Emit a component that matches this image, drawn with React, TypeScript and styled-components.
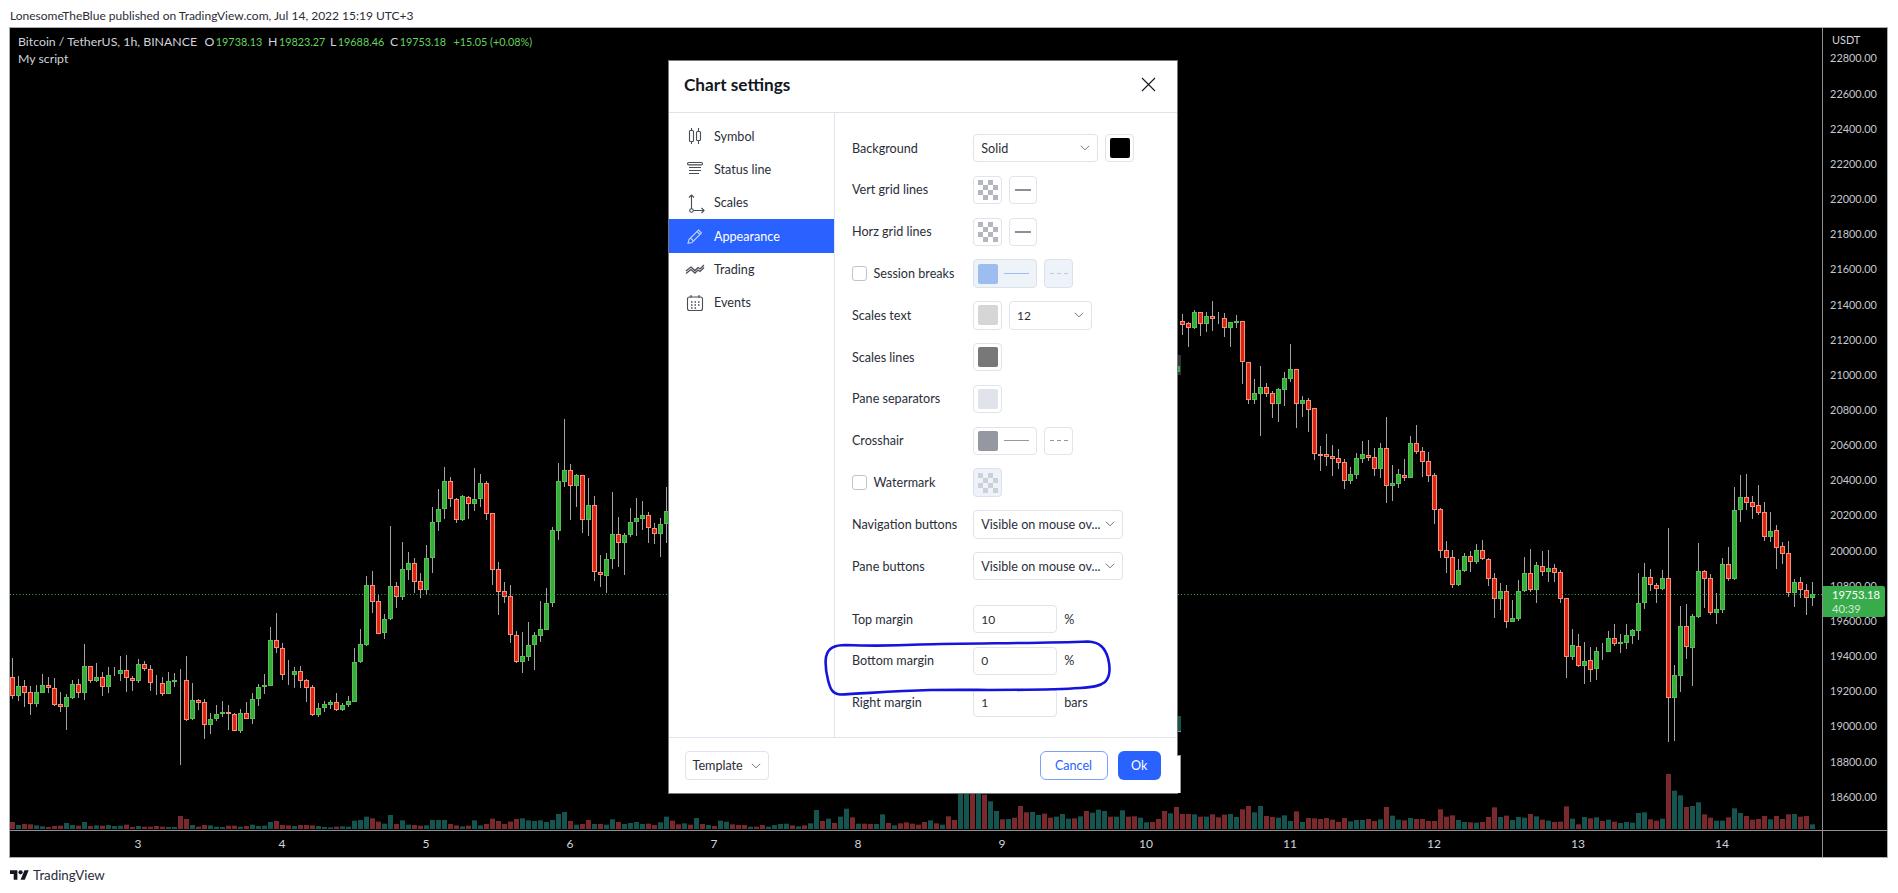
import React from "react";
import styled, { createGlobalStyle } from "styled-components";

const FONT = `Lato, "Noto Sans", "Liberation Sans", sans-serif`;

const Global = createGlobalStyle`
  html, body { margin: 0; padding: 0; background: #fff; }
  body { font-family: ${FONT}; color: #131722; }
  * { box-sizing: border-box; }
`;

/* ---------- chart data: [green, wickTop, bodyTop, bodyBottom, wickBottom] ---------- */
type Row = [number, number, number, number, number];
const at = (base: number, rows: Row[]): Row[] =>
  rows.map(([g, a, b, c, d]) => [g, base + a / 3, base + b / 3, base + c / 3, base + d / 3]);

const candlesA: Row[] = at(620, [
  [0,115,172,227,237],[1,168,199,227,243],[0,180,199,218,260],[0,198,217,251,285],[1,195,217,251,260],
  [1,162,196,218,219],[0,172,196,205,220],[0,175,205,254,258],[0,216,253,260,276],[1,222,232,260,330],
  [1,180,193,233,236],[0,178,193,218,235],[1,72,139,218,240],[0,138,139,182,190],[1,130,172,182,185],
  [0,155,172,200,228],[1,140,166,200,218],[1,140,163,166,168],[1,108,151,163,183],[0,105,151,175,216],
  [0,168,175,182,212],[1,118,133,182,188],[0,122,133,146,152],[0,135,146,188,212],[0,165,187,190,225],
  [0,172,190,221,228],[1,155,184,221,222],[1,158,181,185,200],[0,148,181,183,435],[0,108,181,299,303],
  [1,190,241,298,300],[0,237,241,248,270],[0,238,247,314,356],[1,280,298,314,342],[1,255,283,298,303],
  [1,243,275,283,290],[0,255,275,283,330],[0,280,283,332,333],[1,268,280,332,338],[0,247,280,296,296],
  [1,220,238,296,312],[1,192,202,238,258],[1,162,195,202,222],[1,22,61,197,198],[0,-21,61,85,100],
  [0,70,85,164,180],[0,120,163,165,195],[1,140,153,164,205],[0,138,154,182,205],[0,178,181,203,245],
  [0,195,202,285,287],[1,250,265,285,290],[1,242,253,265,275],[1,240,247,254,268],[0,220,247,270,272],
  [1,248,256,270,274],[1,228,244,256,260],[1,85,127,245,246],[1,28,73,127,130],
]);
const candlesB: Row[] = [
  [1,576,585,645,646],[0,571,585,602,613],[0,594,601,634,634],[1,614,619,633,639],[1,526,586,619,620],
  [0,582,586,597,608],[1,542,569,597,600],[1,552,563,570,580],[0,558,563,582,593],[0,573,581,590,598],
  [1,545,558,590,595],[1,507,522,558,573],[1,489,509,522,531],[1,467,481,509,519],[0,477,481,499,507],
  [0,498,499,520,523],[1,495,496,520,521],[0,496,497,504,519],[1,468,499,504,511],[1,474,483,499,507],
  [0,481,483,514,520],[0,513,513,570,585],[0,562,569,592,615],[0,582,591,597,603],[0,585,596,635,643],
  [0,631,635,662,663],[1,632,656,662,673],[1,622,645,657,661],[1,632,635,645,670],[1,601,629,636,642],
  [1,588,603,630,630],[1,527,530,603,607],[1,463,481,531,540],[1,419,470,482,487],[0,464,470,486,520],
  [1,474,475,486,507],[0,475,475,520,533],[1,478,505,520,536],[0,496,505,572,581],[0,555,572,575,587],
  [1,553,559,576,593],[1,492,534,559,569],[0,517,534,543,567],[1,533,535,543,575],[1,508,522,535,537],
  [1,498,518,522,536],[1,501,515,519,530],[0,512,515,528,543],[0,523,528,534,544],[1,518,524,534,557],
  [1,487,511,524,543],
];
const candlesC: Row[] = at(280, [
  [0,102,124,134,165],[0,125,130,143,200],[1,90,97,144,148],[0,97,97,131,167],[1,97,109,131,155],
  [0,63,109,116,152],[0,97,115,116,133],[0,99,115,143,170],[1,127,127,143,200],[1,105,124,128,143],
  [0,122,124,245,312],[0,245,247,359,372],[1,297,340,359,372],[1,258,322,341,468],[0,310,322,341,350],
  [0,332,340,371,414],[1,325,328,371,426],[1,277,295,329,378],[1,192,268,296,306],[0,268,268,371,443],
  [1,349,361,371,411],[0,355,361,389,455],[0,385,385,521,540],[0,498,522,527,573],[0,462,523,530,558],
  [0,495,529,536,588],[0,507,535,548,567],[0,538,547,602,627],[1,561,583,602,612],[1,519,535,584,597],
  [1,484,523,536,548],[0,480,526,533,543],[0,504,532,566,588],[1,489,505,566,594],[0,411,505,617,669],
  [1,556,610,617,663],[1,568,583,611,624],[0,537,584,593,603],[1,468,490,593,594],[0,435,490,515,522],
  [0,502,514,545,591],[0,516,544,587,606],[0,580,586,689,732],[0,684,688,812,834],[0,783,811,833,879],
]);
const candlesD: Row[] = [
  [0,550,557,585,588],[1,559,570,585,586],[1,553,556,571,572],[0,551,556,562,572],[1,544,550,562,564],
  [0,540,550,559,560],[0,558,559,579,586],[0,573,578,599,618],[1,583,591,599,610],[0,585,591,622,628],
  [1,600,618,622,622],[1,580,591,619,621],[1,557,573,591,592],[0,549,573,590,592],[1,562,565,590,603],
  [0,551,566,572,576],[1,550,568,572,582],[0,564,568,573,582],[0,570,572,599,603],[0,598,598,657,678],
  [1,629,645,657,660],[0,634,646,666,667],[1,642,661,666,684],[0,647,660,670,682],[1,647,651,669,680],
  [0,643,651,652,660],[1,631,638,652,652],[0,624,638,644,646],[1,634,642,644,653],[1,624,635,643,649],
  [1,629,630,636,644],[1,573,603,631,640],[1,563,577,603,609],[0,569,577,585,591],[0,583,585,589,603],
  [1,570,578,589,590],[0,528,578,698,742],[1,665,675,698,741],[1,606,626,676,692],[0,604,626,647,659],
  [1,614,616,648,686],[1,543,571,617,618],[0,570,571,579,608],[0,574,578,613,615],[1,593,609,613,624],
  [1,558,564,610,613],[0,547,564,579,581],[1,487,510,579,580],[1,475,497,510,522],[0,474,497,503,510],
  [0,496,502,507,519],[0,485,505,513,515],[0,502,512,537,541],[1,512,531,537,542],[0,525,530,548,569],
  [0,542,546,554,564],[0,541,553,593,597],[1,579,582,593,607],[0,577,582,590,598],[0,584,590,598,615],
  [1,582,594,598,606],
];

/* volume tops, read per strip: R = red, T = teal */
const volStrip = (base: number, floor: number, s: string) =>
  s.split(" ").map((t) => ({ red: t[0] === "R", h: (floor - Number(t.slice(1))) / base }));

const volume = [
  ...volStrip(3, 627, "R606 T615 R612 R613 T616 T619 R621 R618 R617 T609 T615 R617 T606 R618 T616 R617 T615 T618 T617 R614 R621 T618 R620 R620 R618 R620 T621 T621 R588 R597 T615 R620 R615 T616 T620 T621 R617 R617 T620 R618 T614 T618 T617 T606 R603 R615 R616 T618 R615 R615 R616 T618 T621 T622 R620 T619 T620 T602 T600 T590 R595 R605 T611 T585 R612 T601 T614 R615 R617 T616 T600 T600 T600 R612 R616 T619 R617 T601 T616 R612 R596 R603 R612 R605 R597 T595 T601 T603 T601 T606 T600 T582 T576 R603 T614 R612 R600 T612 R612 T614 T598 R606 T612 T609 T606 T612 R611 R615 T607"),
  ...volStrip(3, 387, "T350 R362 R373 T370 R374 T354 R372 T375 R378 T362 T365 R373 R375 R375 T380 R380 R375 T380 T375 T372 T371 R376 T379 R376 T370 T330 R363 T356 R369 T350 T326 R352 T371 R371 R372 T372 T343 R369 T376 R370 R367 R371 R374 R366 T361 R370 T374 R349 R360 T270 T270 R270 T270 R284 T304 T333 R358 T357 R353 R318 R337 T336 T345 R341 R353 T350 T342 T356 R355 T349 R333 T338 T329 T333 R350 T350 T331 R350 R349 T353 T367 R366 R357 R333 T340 R321"),
  ...volStrip(3, 807, "R762 R762 T763 R770 T770 R763 R772 R764 T762 T771 R748 R738 T757 T738 R768 R771 T773 T766 T783 R754 T786 R774 R775 R777 R774 R779 R786 R774 T784 T780 T780 R777 R783 T778 R741 T767 T779 R781 T774 R777 R777 R783 R783 R748 R770 R766 T780 T786 R787 T788 R786 R771 R742 T771 R767 T780 T771 T773 R762 T769 R779 T782 R786 R785 R739 T776 R793 T771 R775 T772 R783 T779 R785 T789 T786 T788 T759 T757 R778 R782 T776 R642 T692 T706 R741 T738 T727 R763 R773 T782 T782 R772"),
  ...volStrip(3, 987, "T925 T939 R948 R959 R957 R948 T958 R948 R957 R943 T942 R950 R948 T973"),
];

const barX = (i: number) => 12.6 + 6 * i;

const ChartDrawing = () => {
  const groups: Array<[number, Row[]]> = [[0, candlesA], [59, candlesB], [195, candlesC], [240, candlesD]];
  return (
    <PlotSvg viewBox="10 28 1812 802" width={1812} height={802}>
      {volume.map((v, i) => (
        <rect key={i} x={Math.round(barX(i) - 2.5)} y={829 - v.h} width={5} height={v.h} fill={v.red ? "#7a2a2d" : "#15544f"} />
      ))}
      {groups.map(([start, rows]) =>
        rows.map(([g, wt, bt, bb, wb], k) => {
          const cx = Math.round(barX(start + k) - 0.5) + 0.5;
          const t = Math.round(bt);
          const b = Math.round(bb);
          return (
            <g key={start + k}>
              <line x1={cx} x2={cx} y1={Math.round(wt)} y2={Math.round(wb)} stroke="#a3a3a3" strokeWidth={1} />
              <rect
                x={cx - 2}
                y={t + 0.5}
                width={4}
                height={Math.max(0, b - t - 1)}
                fill={g ? "#37ab3c" : "#de2317"}
                stroke={g ? "#55c24f" : "#f49272"}
                strokeWidth={1}
              />
            </g>
          );
        })
      )}
      <line x1={10} x2={1822} y1={594.5} y2={594.5} stroke="#2fae4c" strokeWidth={1} strokeDasharray="1 2.2" />
      <rect x={1177} y={716} width={4} height={15} fill="#15544f" />
      <rect x={1177} y={731} width={4} height={1} fill="#8a8a8a" />
      <rect x={1177} y={355} width={4} height={20} fill="#333" />
      <rect x={1177} y={366} width={3} height={6} fill="#37ab3c" />
    </PlotSvg>
  );
};

/* ---------- page ---------- */
const Page = styled.div`
  width: 1898px;
  height: 893px;
  overflow: hidden;
  background: #fff;
  position: relative;
`;
const Published = styled.div`
  height: 27px;
  padding: 8px 0 0 10px;
  font-size: 12px;
  line-height: 15px;
  color: #2a2e39;
`;
const Frame = styled.div`
  position: relative;
  margin-left: 9px;
  width: 1879px;
  height: 831px;
  background: #000;
  border: 1px solid #a9abb3;
  display: flex;
  flex-direction: column;
`;
const ChartRow = styled.div`
  display: flex;
  height: 802px;
`;
const Plot = styled.div`
  position: relative;
  width: 1812px;
  height: 802px;
`;
const PlotSvg = styled.svg`
  display: block;
`;
const Legend = styled.div`
  position: absolute;
  left: 8px;
  top: 5px;
  font-size: 12.3px;
  line-height: 17px;
  color: #d1d4dc;
`;
const LegendLine = styled.div`
  display: flex;
  align-items: baseline;
  white-space: nowrap;
`;
const LegendName = styled.span`
  width: 186.5px;
`;
const LegendPair = styled.span<{ $w: number }>`
  width: ${(p) => p.$w}px;
`;
const Up = styled.span`
  color: #63d35f;
  font-size: 10.8px;
  margin-left: 1.5px;
`;

const PriceAxis = styled.div`
  position: relative;
  width: 65px;
  border-left: 1px solid #8f9096;
  color: #c6c8ce;
  font-size: 10.9px;
  text-align: center;
`;
const AxisUnit = styled.div`
  height: 24px;
  margin-bottom: -11.6px;
  line-height: 24px;
  text-align: left;
  padding-left: 9px;
  color: #d1d4dc;
`;
const PriceLabel = styled.div`
  height: 35.17px;
  line-height: 35.17px;
  padding-right: 3px;
`;
const PriceTag = styled.div`
  position: absolute;
  left: 0;
  top: 558px;
  width: 62px;
  height: 31px;
  background: #38ac4b;
  border-radius: 0 2px 2px 0;
  color: #fff;
  font-size: 11.2px;
  line-height: 14px;
  padding: 2px 0 0 9px;
  text-align: left;
`;
const Countdown = styled.div`
  color: #cfead4;
`;
const TimeRow = styled.div`
  display: flex;
  flex: 1;
  border-top: 1px solid #8f9096;
`;
const TimeAxis = styled.div`
  width: 1812px;
  display: flex;
  padding-left: 56px;
  color: #d1d4dc;
  font-size: 12px;
  line-height: 26px;
`;
const TimeLabel = styled.div`
  width: 144px;
  text-align: center;
`;
const AxisCorner = styled.div`
  flex: 1;
  border-left: 1px solid #8f9096;
`;
const Brand = styled.div`
  height: 33px;
  padding-left: 10px;
  display: flex;
  align-items: center;
  gap: 4px;
  font-size: 13.3px;
  color: #2a2e39;
`;

/* ---------- dialog ---------- */
const Dialog = styled.div`
  position: absolute;
  left: 659px;
  top: 33px;
  width: 507.5px;
  height: 732px;
  background: #fff;
  box-shadow: 0 0 0 1px #77787d;
  display: flex;
  flex-direction: column;
  color: #2a2e39;
  font-size: 12.6px;
`;
const DialogTail = styled.div`
  position: absolute;
  left: 100%;
  bottom: 0;
  width: 4px;
  height: 38px;
  background: #fff;
  border-top: 1px solid #999;
  border-right: 1px solid #999;
`;
const DialogHead = styled.div`
  height: 52px;
  flex: none;
  display: flex;
  align-items: center;
  justify-content: space-between;
  padding: 0 21px 4px 15px;
  border-bottom: 1px solid #e0e3eb;
`;
const DialogTitle = styled.div`
  font-size: 17.2px;
  font-weight: 700;
  color: #131722;
`;
const CloseIcon = styled.svg`
  display: block;
  color: #131722;
`;
const DialogBody = styled.div`
  flex: 1;
  display: flex;
  min-height: 0;
`;
const Side = styled.div`
  width: 166px;
  flex: none;
  padding-top: 6.5px;
  border-right: 1px solid #e0e3eb;
`;
const SideItem = styled.div<{ $active?: boolean }>`
  height: 33.33px;
  display: flex;
  align-items: center;
  gap: 8px;
  padding-left: 15px;
  background: ${(p) => (p.$active ? "#2962ff" : "transparent")};
  color: ${(p) => (p.$active ? "#fff" : "#2a2e39")};
`;
const SideIcon = styled.svg<{ $active?: boolean }>`
  flex: none;
  width: 22px;
  height: 22px;
  fill: none;
  stroke: currentColor;
  stroke-width: 1.1;
  opacity: ${(p) => (p.$active ? 0.7 : 0.85)};
`;
const Panel = styled.div`
  flex: 1;
  padding: 21px 0 0 17px;
  display: flex;
  flex-direction: column;
  gap: 13.47px;
`;
const FieldRow = styled.div<{ $spaced?: boolean }>`
  height: 28.33px;
  display: flex;
  align-items: center;
  margin-top: ${(p) => (p.$spaced ? "11.2px" : "0")};
`;
const FieldLabel = styled.div`
  width: 121.3px;
  flex: none;
  display: flex;
  align-items: center;
  gap: 7px;
  white-space: nowrap;
`;
const Check = styled.span`
  width: 14.5px;
  height: 14.5px;
  border: 1px solid #c1c4cd;
  border-radius: 3px;
  background: #fff;
`;
const Controls = styled.div`
  display: flex;
  align-items: center;
  gap: 7px;
  height: 100%;
`;
const Select = styled.div<{ $w: number; $digits?: boolean }>`
  width: ${(p) => p.$w}px;
  height: 100%;
  border: 1px solid #e0e3eb;
  border-radius: 4px;
  display: flex;
  align-items: center;
  justify-content: space-between;
  padding: 0 7px 0 7px;
  color: #2a2e39;
  white-space: nowrap;
  font-size: ${(p) => (p.$digits ? "12px" : "inherit")};
`;
const TemplateSelect = styled(Select)`
  height: 29px;
`;
const Chevron = styled.svg`
  flex: none;
  display: block;
  color: #787b86;
`;
const SwatchButton = styled.div<{ $w?: number; $muted?: boolean }>`
  width: ${(p) => p.$w ?? 28.7}px;
  height: 100%;
  flex: none;
  border: 1px solid ${(p) => (p.$muted ? "#dde1ec" : "#e0e3eb")};
  border-radius: 4px;
  background: ${(p) => (p.$muted ? "#eef2f9" : "#fff")};
  display: flex;
  align-items: center;
  padding-left: 3.5px;
  gap: 6px;
`;
const CenterButton = styled(SwatchButton)`
  justify-content: center;
  padding-left: 0;
`;
const Swatch = styled.span<{ $c: string }>`
  width: 20px;
  height: 20px;
  flex: none;
  border-radius: 2px;
  background: ${(p) => p.$c};
`;
const Stroke = styled.span<{ $c: string; $w: number }>`
  width: ${(p) => p.$w}px;
  height: 1.5px;
  background: ${(p) => p.$c};
`;
const Dashes = styled.span<{ $c: string }>`
  width: 18px;
  height: 1.5px;
  background: repeating-linear-gradient(to right, ${(p) => p.$c} 0 4px, transparent 4px 7px);
`;
const CheckerSvg = styled.svg<{ $faded?: boolean }>`
  display: block;
  opacity: ${(p) => (p.$faded ? 0.55 : 1)};
`;
const NumberBox = styled.div`
  width: 84px;
  height: 100%;
  border: 1px solid #e0e3eb;
  border-radius: 4px;
  display: flex;
  align-items: center;
  padding-left: 7px;
  font-size: 12px;
`;
const Suffix = styled.span`
  margin-left: 0;
`;
const DialogFoot = styled.div`
  height: 56px;
  flex: none;
  display: flex;
  align-items: center;
  justify-content: space-between;
  padding: 0 16px 0 15.5px;
  border-top: 1px solid #e0e3eb;
`;
const Buttons = styled.div`
  display: flex;
  gap: 10.5px;
`;
const CancelButton = styled.div`
  width: 68px;
  height: 29px;
  border: 1px solid #7d9fff;
  border-radius: 6px;
  color: #2962ff;
  display: flex;
  align-items: center;
  justify-content: center;
`;
const OkButton = styled.div`
  width: 42.5px;
  height: 29px;
  border-radius: 6px;
  background: #2962ff;
  color: #fff;
  display: flex;
  align-items: center;
  justify-content: center;
`;
const Scribble = styled.svg`
  position: absolute;
  left: 0;
  top: 0;
  pointer-events: none;
`;

/* ---------- small drawings ---------- */
const Checker = ({ faded }: { faded?: boolean }) => (
  <CheckerSvg width={20} height={20} viewBox="0 0 20 20" $faded={faded}>
    {[0, 1, 2, 3].flatMap((r) =>
      [0, 1, 2, 3].map((c) =>
        (r + c) % 2 === 0 ? <rect key={`${r}${c}`} x={c * 5} y={r * 5} width={5} height={5} fill="#b4b6bd" /> : null
      )
    )}
  </CheckerSvg>
);
const Down = () => (
  <Chevron width={10} height={6} viewBox="0 0 10 6">
    <path d="M.8.8 5 4.8 9.2.8" fill="none" stroke="currentColor" strokeWidth={1} />
  </Chevron>
);
const SymbolIcon = () => (
  <SideIcon viewBox="0 0 22 22">
    <path d="M7.5 3v2.5M7.5 16.5V19M14.5 3v3.5M14.5 15.5V19" />
    <rect x="5.5" y="5.5" width="4" height="11" rx="1" />
    <rect x="12.5" y="6.5" width="4" height="9" rx="1" />
  </SideIcon>
);
const StatusIcon = () => (
  <SideIcon viewBox="0 0 22 22">
    <rect x="3.5" y="4.5" width="15" height="2.4" rx="1.2" />
    <path d="M5 9.5h12M5 12.5h12M5 15.5h10" />
  </SideIcon>
);
const ScalesIcon = () => (
  <SideIcon viewBox="0 0 22 22">
    <path d="M7.5 3v14M5 5.5 7.5 3 10 5.5M9.5 18.5H20M17.5 16l2.5 2.5-2.5 2.5" />
    <circle cx="7.5" cy="18.5" r="1.8" />
  </SideIcon>
);
const PencilIcon = () => (
  <SideIcon viewBox="0 0 22 22" $active>
    <path d="M5 14.5 14.5 5l3 3L8 17.5l-4 .8zM13 6.5l3 3M6.5 13l3 3" />
  </SideIcon>
);
const TradingIcon = () => (
  <SideIcon viewBox="0 0 22 22">
    <path d="M2 13 7 9l4 3.5 3-3 2 1.5 4-4M2 15.5l5-4 4 3.5 3-3 2 1.5 4-4" strokeWidth="1.3" />
  </SideIcon>
);
const EventsIcon = () => (
  <SideIcon viewBox="0 0 22 22">
    <rect x="3.5" y="5" width="15" height="13.5" rx="2" />
    <path d="M7 3v3M15 3v3" />
    <path d="M7 10h1.5M10.5 10H12M14 10h1.5M7 13h1.5M10.5 13H12M14 13h1.5M10.5 16H12M7 16h1.5" strokeWidth="1.4" />
  </SideIcon>
);

const prices = [22800,22600,22400,22200,22000,21800,21600,21400,21200,21000,20800,20600,20400,20200,20000,19800,19600,19400,19200,19000,18800,18600];
const days = [3,4,5,6,7,8,9,10,11,12,13,14];
const visible = "Visible on mouse ov...";

export default function App() {
  return (
    <Page>
      <Global />
      <Published>LonesomeTheBlue published on TradingView.com, Jul 14, 2022 15:19 UTC+3</Published>
      <Frame>
        <ChartRow>
          <Plot>
            <ChartDrawing />
            <Legend>
              <LegendLine>
                <LegendName>Bitcoin / TetherUS, 1h, BINANCE</LegendName>
                <LegendPair $w={63.5}>O<Up>19738.13</Up></LegendPair>
                <LegendPair $w={62}>H<Up>19823.27</Up></LegendPair>
                <LegendPair $w={60}>L<Up>19688.46</Up></LegendPair>
                <LegendPair $w={62}>C<Up>19753.18</Up></LegendPair>
                <Up>+15.05 (+0.08%)</Up>
              </LegendLine>
              <LegendLine>My script</LegendLine>
            </Legend>
          </Plot>
          <PriceAxis>
            <AxisUnit>USDT</AxisUnit>
            {prices.map((p) => (
              <PriceLabel key={p}>{p.toFixed(2)}</PriceLabel>
            ))}
            <PriceTag>
              19753.18
              <Countdown>40:39</Countdown>
            </PriceTag>
          </PriceAxis>
        </ChartRow>
        <TimeRow>
          <TimeAxis>
            {days.map((d) => (
              <TimeLabel key={d}>{d}</TimeLabel>
            ))}
          </TimeAxis>
          <AxisCorner />
        </TimeRow>

        <Dialog>
          <DialogTail />
          <DialogHead>
            <DialogTitle>Chart settings</DialogTitle>
            <CloseIcon width={15} height={15} viewBox="0 0 15 15">
              <path d="M1 1l13 13M14 1 1 14" stroke="currentColor" strokeWidth={1.1} fill="none" />
            </CloseIcon>
          </DialogHead>
          <DialogBody>
            <Side>
              <SideItem><SymbolIcon />Symbol</SideItem>
              <SideItem><StatusIcon />Status line</SideItem>
              <SideItem><ScalesIcon />Scales</SideItem>
              <SideItem $active><PencilIcon />Appearance</SideItem>
              <SideItem><TradingIcon />Trading</SideItem>
              <SideItem><EventsIcon />Events</SideItem>
            </Side>
            <Panel>
              <FieldRow>
                <FieldLabel>Background</FieldLabel>
                <Controls>
                  <Select $w={125}>Solid<Down /></Select>
                  <SwatchButton><Swatch $c="#000" /></SwatchButton>
                </Controls>
              </FieldRow>
              <FieldRow>
                <FieldLabel>Vert grid lines</FieldLabel>
                <Controls>
                  <CenterButton><Checker /></CenterButton>
                  <CenterButton $w={28}><Stroke $c="#8c8f98" $w={16} /></CenterButton>
                </Controls>
              </FieldRow>
              <FieldRow>
                <FieldLabel>Horz grid lines</FieldLabel>
                <Controls>
                  <CenterButton><Checker /></CenterButton>
                  <CenterButton $w={28}><Stroke $c="#8c8f98" $w={16} /></CenterButton>
                </Controls>
              </FieldRow>
              <FieldRow>
                <FieldLabel><Check />Session breaks</FieldLabel>
                <Controls>
                  <SwatchButton $w={64} $muted><Swatch $c="#9dbdf0" /><Stroke $c="#9dbdf0" $w={25} /></SwatchButton>
                  <CenterButton $w={29} $muted><Dashes $c="#c5c8d2" /></CenterButton>
                </Controls>
              </FieldRow>
              <FieldRow>
                <FieldLabel>Scales text</FieldLabel>
                <Controls>
                  <SwatchButton><Swatch $c="#d6d6d6" /></SwatchButton>
                  <Select $w={83.5} $digits>12<Down /></Select>
                </Controls>
              </FieldRow>
              <FieldRow>
                <FieldLabel>Scales lines</FieldLabel>
                <Controls><SwatchButton><Swatch $c="#787878" /></SwatchButton></Controls>
              </FieldRow>
              <FieldRow>
                <FieldLabel>Pane separators</FieldLabel>
                <Controls><SwatchButton><Swatch $c="#e0e3eb" /></SwatchButton></Controls>
              </FieldRow>
              <FieldRow>
                <FieldLabel>Crosshair</FieldLabel>
                <Controls>
                  <SwatchButton $w={64}><Swatch $c="#9598a1" /><Stroke $c="#9598a1" $w={25} /></SwatchButton>
                  <CenterButton $w={29}><Dashes $c="#9598a1" /></CenterButton>
                </Controls>
              </FieldRow>
              <FieldRow>
                <FieldLabel><Check />Watermark</FieldLabel>
                <Controls><CenterButton $muted><Checker faded /></CenterButton></Controls>
              </FieldRow>
              <FieldRow>
                <FieldLabel>Navigation buttons</FieldLabel>
                <Controls><Select $w={150}>{visible}<Down /></Select></Controls>
              </FieldRow>
              <FieldRow>
                <FieldLabel>Pane buttons</FieldLabel>
                <Controls><Select $w={150}>{visible}<Down /></Select></Controls>
              </FieldRow>
              <FieldRow $spaced>
                <FieldLabel>Top margin</FieldLabel>
                <Controls><NumberBox>10</NumberBox><Suffix>%</Suffix></Controls>
              </FieldRow>
              <FieldRow>
                <FieldLabel>Bottom margin</FieldLabel>
                <Controls><NumberBox>0</NumberBox><Suffix>%</Suffix></Controls>
              </FieldRow>
              <FieldRow>
                <FieldLabel>Right margin</FieldLabel>
                <Controls><NumberBox>1</NumberBox><Suffix>bars</Suffix></Controls>
              </FieldRow>
            </Panel>
          </DialogBody>
          <DialogFoot>
            <TemplateSelect $w={84}>Template<Down /></TemplateSelect>
            <Buttons>
              <CancelButton>Cancel</CancelButton>
              <OkButton>Ok</OkButton>
            </Buttons>
          </DialogFoot>
        </Dialog>
      </Frame>
      <Brand>
        <svg width={19} height={10} viewBox="0 4 36 18">
          <path d="M14 22H7V11H0V4h14v18zM28 22h-8l7.5-18h8L28 22z" fill="#131722" />
          <circle cx={20} cy={8} r={4} fill="#131722" />
        </svg>
        TradingView
      </Brand>
      <Scribble width={1898} height={893} viewBox="0 0 1898 893">
        <path
          d="M826 657C828 648 834 645 846 645C870 646 890 646 920 644.5C970 643 1040 643.5 1088 641.5C1100 642 1105 648 1108 658C1111 670 1110 677 1105 682C1100 686 1094 687 1080 688C1040 691 980 689.5 930 690C890 691 860 694 840 694.5C832 694 830 688 828 680C826 672 825 664 826 657Z"
          fill="none"
          stroke="#1414dc"
          strokeWidth={2.6}
          strokeLinejoin="round"
        />
      </Scribble>
    </Page>
  );
}
